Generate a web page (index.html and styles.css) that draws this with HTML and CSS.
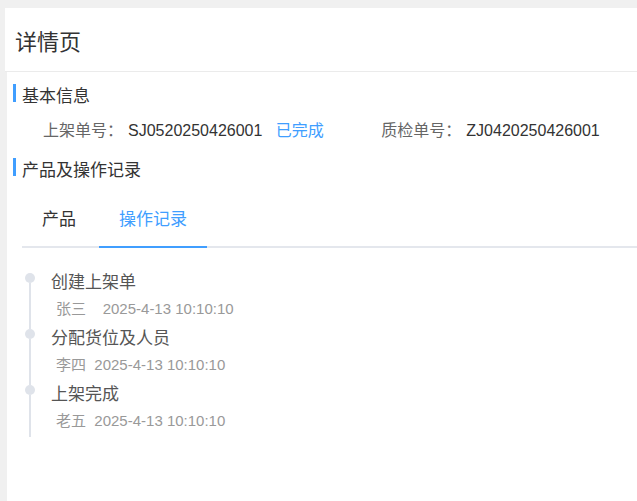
FILE: index.html
```html
<!doctype html>
<html>
  <head>
    <meta charset="utf-8">
    <link rel="stylesheet" href="styles.css">
    <title>详情页</title>
  </head>
  <body>
    <div id="page-header">
      <h1>详情页</h1>
    </div>
    <div id="page-body">
      <div class="section-title">基本信息</div>
      <div class="info-row">
        <span class="label">上架单号：</span><span class="value">SJ0520250426001</span>
        <span class="status">已完成</span>
        <span class="label second">质检单号：</span><span class="value">ZJ0420250426001</span>
      </div>

      <div class="section-title">产品及操作记录</div>
      <div class="tabs">
        <div class="tab">产品</div>
        <div class="tab active">操作记录</div>
      </div>

      <div class="timeline">
        <div class="step">
          <div class="rail"><span class="dot"></span><span class="line"></span></div>
          <div class="step-body">
            <div class="step-title">创建上架单</div>
            <div class="step-meta">张三&nbsp;&nbsp;&nbsp; 2025-4-13 10:10:10</div>
          </div>
        </div>
        <div class="step">
          <div class="rail"><span class="dot"></span><span class="line"></span></div>
          <div class="step-body">
            <div class="step-title">分配货位及人员</div>
            <div class="step-meta">李四&nbsp; 2025-4-13 10:10:10</div>
          </div>
        </div>
        <div class="step last">
          <div class="rail"><span class="dot"></span><span class="line"></span></div>
          <div class="step-body">
            <div class="step-title">上架完成</div>
            <div class="step-meta">老五&nbsp; 2025-4-13 10:10:10</div>
          </div>
        </div>
      </div>
    </div>
  </body>
</html>
```

FILE: styles.css
```css
body {
  margin: 0;
  padding-top: 8px;
  background: #f0f0f0;
  font-family: "Liberation Sans", "Noto Sans CJK SC", sans-serif;
  color: #333;
}

#page-header {
  margin-left: 5px;
  height: 63px;
  display: flex;
  align-items: center;
  padding-left: 10px;
  background: #fff;
  border-bottom: 1px solid #ebebeb;
}

h1 {
  margin: 0;
  font-size: 22px;
  font-weight: normal;
  color: #333;
}

#page-body {
  margin-left: 7px;
  height: 429px;
  padding: 10px 0 0 6px;
  background: #fff;
}

.section-title {
  display: flex;
  align-items: flex-start;
  font-size: 17px;
  line-height: 30px;
  color: #333;
}

.section-title::before {
  content: "";
  width: 3px;
  height: 18px;
  margin: 2px 6px 0 0;
  background: #409eff;
}

.info-row {
  margin: 7px 0 13px 30px;
  font-size: 16px;
  line-height: 24px;
}

.label {
  color: #666;
  margin-right: 5px;
}

.value {
  color: #333;
}

.status {
  color: #409eff;
  margin-left: 9px;
}

.second {
  margin-left: 53px;
}

.tabs {
  display: flex;
  margin: 6px 0 0 9px;
  border-bottom: 2px solid #e4e7ed;
}

.tab {
  height: 54px;
  line-height: 56px;
  padding: 0 20px;
  font-size: 17px;
  color: #333;
  margin-bottom: -2px;
  border-bottom: 2px solid transparent;
}

.tab.active {
  margin-left: 3px;
  color: #409eff;
  border-bottom-color: #409eff;
}

.timeline {
  margin: 25px 0 0 12px;
}

.step {
  display: flex;
  height: 56px;
}

.step.last {
  height: 52px;
}

.rail {
  width: 10px;
  display: flex;
  flex-direction: column;
  align-items: center;
}

.dot {
  width: 10px;
  height: 10px;
  border-radius: 50%;
  background: #dfe3ea;
}

.line {
  flex: 1;
  width: 2px;
  background: #dfe3ea;
}

.step-body {
  padding-left: 16px;
}

.step-title {
  font-size: 17px;
  line-height: 20px;
  color: #555;
}

.step-meta {
  margin-top: 6px;
  padding-left: 5px;
  font-size: 15px;
  line-height: 20px;
  color: #999;
}
```
